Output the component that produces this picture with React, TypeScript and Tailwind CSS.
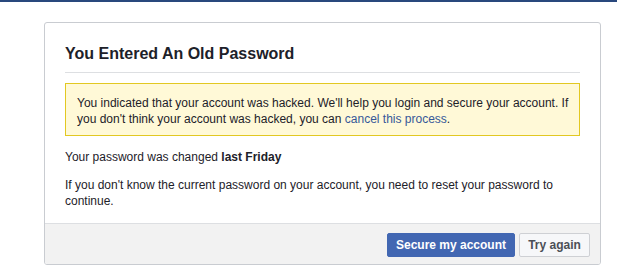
import React from 'react'

const App = () => {
  return (
    <div
      className="min-h-screen border-t-2 border-[#29487d] bg-white pt-[20px] text-[12px] leading-[16px] text-[#1d2129]"
      style={{ fontFamily: '"Liberation Sans", Arial, Helvetica, sans-serif' }}
    >
      <div className="ml-[44px] w-[557px] overflow-hidden rounded-[3px] border border-[#c9ccd1] bg-white">
        {/* Body */}
        <div className="px-[20px] pb-[14px] pt-[21px]">
          <h2 className="border-b border-[#dddfe2] pb-[8px] text-[16px] font-bold leading-[20px] text-[#1d2129]">
            You Entered An Old Password
          </h2>

          <div className="mt-[10px] border border-[#e2c822] bg-[#fff9d7] pb-[8px] pl-[11px] pr-[4px] pt-[11px]">
            <p>
              You indicated that your account was hacked. We'll help you login and secure your account. If
              you don't think your account was hacked, you can{' '}
              <a href="#" className="text-[#365899]">
                cancel this process
              </a>
              .
            </p>
          </div>

          <p className="mt-[13px]">
            Your password was changed <span className="font-bold">last Friday</span>
          </p>

          <p className="mt-[12px]">
            If you don't know the current password on your account, you need to reset your password to
            continue.
          </p>
        </div>

        {/* Footer */}
        <div className="flex justify-end gap-[4px] border-t border-[#dddfe2] bg-[#f2f2f2] pb-[7px] pr-[10px] pt-[9px]">
          <button className="h-[24px] w-[128px] rounded-[2px] border border-[#4267b2] bg-[#4267b2] text-[12px] font-bold text-white">
            Secure my account
          </button>
          <button className="h-[24px] w-[71px] rounded-[2px] border border-[#ced0d4] bg-[#f6f7f9] text-[12px] font-bold text-[#4b4f56]">
            Try again
          </button>
        </div>
      </div>
    </div>
  )
}

export default App
